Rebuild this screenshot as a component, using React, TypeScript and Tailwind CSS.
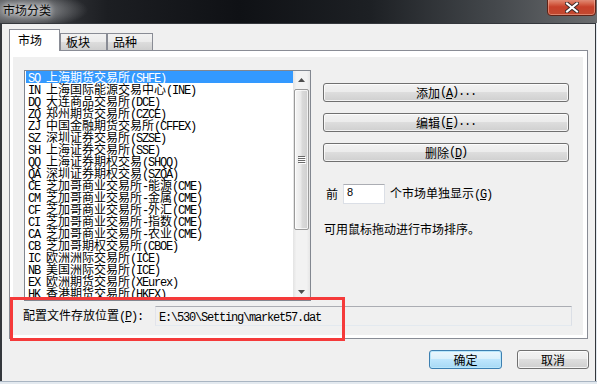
import React from "react";

const rows: [string, string][] = [
  ["SQ", "上海期货交易所(SHFE)"],
  ["IN", "上海国际能源交易中心(INE)"],
  ["DQ", "大连商品交易所(DCE)"],
  ["ZQ", "郑州期货交易所(CZCE)"],
  ["ZJ", "中国金融期货交易所(CFFEX)"],
  ["SZ", "深圳证券交易所(SZSE)"],
  ["SH", "上海证券交易所(SSE)"],
  ["QQ", "上海证券期权交易(SHQQ)"],
  ["QA", "深圳证券期权交易(SZQA)"],
  ["CE", "芝加哥商业交易所-能源(CME)"],
  ["CM", "芝加哥商业交易所-金属(CME)"],
  ["CF", "芝加哥商业交易所-外汇(CME)"],
  ["CI", "芝加哥商业交易所-指数(CME)"],
  ["CA", "芝加哥商业交易所-农业(CME)"],
  ["CB", "芝加哥期权交易所(CBOE)"],
  ["IC", "欧洲洲际交易所(ICE)"],
  ["NB", "美国洲际交易所(ICE)"],
  ["EX", "欧洲期货交易所(XEurex)"],
  ["HK", "香港期货交易所(HKEX)"],
];

function Mix({ t }: { t: string }) {
  const runs: { a: boolean; s: string }[] = [];
  for (const ch of t) {
    const a = ch.charCodeAt(0) < 128;
    const last = runs[runs.length - 1];
    if (last && last.a === a) last.s += ch;
    else runs.push({ a, s: ch });
  }
  return (
    <>
      {runs.map((r, i) =>
        r.a ? (
          <span key={i} className="font-['Liberation_Mono',monospace] tracking-[-1.2px] whitespace-pre">
            {r.s}
          </span>
        ) : (
          <span key={i}>{r.s}</span>
        )
      )}
    </>
  );
}

function Mn({ pre, k, post }: { pre: string; k: string; post: string }) {
  return (
    <>
      <Mix t={pre} />
      <span className="underline underline-offset-[1px]">
        <Mix t={k} />
      </span>
      <Mix t={post} />
    </>
  );
}

function Btn({ children, primary, className }: { children: React.ReactNode; primary?: boolean; className?: string }) {
  return (
    <div
      className={
        (primary
          ? "border border-[#3c7fb1] bg-[linear-gradient(to_bottom,#eaf6fd_0%,#d9f0fc_49%,#bee6fd_50%,#a7d9f5_100%)] shadow-[inset_0_0_0_1px_#b8e6fb] "
          : "border border-[#707070] bg-[linear-gradient(to_bottom,#f2f2f2_0%,#ebebeb_49%,#dddddd_50%,#cfcfcf_100%)] shadow-[inset_0_0_0_1px_rgba(255,255,255,0.75)] ") +
        "rounded-[3px] h-[19px] flex items-center justify-center text-[12px] leading-[17px] text-black " +
        (className ?? "")
      }
    >
      {children}
    </div>
  );
}

function Arrow({ up }: { up?: boolean }) {
  return (
    <svg width="7" height="4" viewBox="0 0 7 4">
      {up ? <path d="M3.5 0 L7 4 L0 4 Z" fill="#4d4d4d" /> : <path d="M0 0 L7 0 L3.5 4 Z" fill="#4d4d4d" />}
    </svg>
  );
}

export default function App() {
  return (
    <div className="relative w-[597px] h-[384px] overflow-hidden bg-[#e3e9ef] flex flex-col font-['Noto_Sans_CJK_SC',sans-serif] text-[12px] text-black">
      {/* Title bar */}
      <div className="relative h-[23px] shrink-0 bg-[radial-gradient(ellipse_60px_18px_at_28px_10px,rgba(190,192,195,0.8),rgba(190,192,195,0)_100%),linear-gradient(to_right,#4a4c50_0%,#1c1e22_18%,#0f1115_40%,#1d2024_62%,#464a4e_84%,#6b6d6f_100%)]">
        <span className="absolute left-[3px] top-[2px] text-[12px] leading-[16px] text-[#0a0a0a] [text-shadow:0_0_5px_rgba(255,255,255,0.9),0_0_9px_rgba(255,255,255,0.6)]">
          市场分类
        </span>
        <div className="absolute right-[1px] top-[-4px] w-[49px] h-[20px] rounded-b-[4px] border border-[#5e2317] bg-[linear-gradient(to_bottom,#e7a897_0%,#d7684f_35%,#c7402a_55%,#c24a31_100%)] shadow-[inset_0_0_0_1px_rgba(255,200,180,0.45)] flex items-center justify-center">
          <svg width="14" height="11" viewBox="0 0 14 11" className="mt-[2px]">
            <path d="M2 1.5 L12 9.5 M12 1.5 L2 9.5" stroke="#3a2a2a" strokeWidth="4" strokeLinecap="square" />
            <path d="M2 1.5 L12 9.5 M12 1.5 L2 9.5" stroke="#ffffff" strokeWidth="2" strokeLinecap="square" />
          </svg>
        </div>
      </div>

      {/* Client */}
      <div className="h-[358px] w-[596px] shrink-0 border-t border-l-2 border-r border-[#34373c] bg-[#f0f0f0] flex flex-col">
        <div className="pt-[5px] pl-[7px] pr-[7px] flex flex-col">
          {/* Tabs */}
          <div className="flex items-end h-[21px]">
            <div className="relative z-10 -mb-px h-[22px] w-[51px] border border-b-0 border-[#898c95] bg-white pl-[8px] pt-[2px] text-[12px] leading-[16px]">
              市场
            </div>
            <div className="h-[17px] w-[47px] border border-b-0 border-[#898c95] bg-[linear-gradient(to_bottom,#f2f2f2_0%,#ebebeb_49%,#dddddd_50%,#cfcfcf_100%)] pl-[5px] text-[12px] leading-[16px]">
              板块
            </div>
            <div className="h-[17px] w-[46px] border border-b-0 border-[#898c95] bg-[linear-gradient(to_bottom,#f2f2f2_0%,#ebebeb_49%,#dddddd_50%,#cfcfcf_100%)] pl-[5px] text-[12px] leading-[16px]">
              品种
            </div>
          </div>

          {/* Panel */}
          <div className="h-[289px] border border-[#898c95] bg-white pt-[6px] pl-[3px] pr-[4px] pb-[3px] flex">
            <div className="flex-1 bg-[#f0f0f0] pt-[13px] pl-[11px] flex flex-col">
              <div className="flex">
                {/* List */}
                <div className="w-[287px] h-[231px] border border-[#828790] bg-white flex">
                  <div className="flex-1 overflow-hidden pl-[1px]">
                    {rows.map(([c, n], i) => (
                      <div
                        key={c}
                        className={
                          i === 0
                            ? "h-[12px] leading-[12px] pl-[2px] whitespace-nowrap bg-[#3399ff] text-white"
                            : "h-[12px] leading-[12px] pl-[2px] whitespace-nowrap text-black"
                        }
                      >
                        <Mix t={`${c} ${n}`} />
                      </div>
                    ))}
                  </div>
                  {/* Scrollbar */}
                  <div className="w-[17px] flex flex-col bg-[linear-gradient(to_right,#e3e3e3_0%,#f2f2f2_20%,#f2f2f2_80%,#e6e6e6_100%)]">
                    <div className="h-[17px] flex items-center justify-center">
                      <Arrow up />
                    </div>
                    <div className="mt-[1px] mx-[1px] h-[141px] rounded-[2px] border border-[#9a9a9a] bg-[linear-gradient(to_right,#f6f6f6_0%,#e9e9e9_45%,#dadada_55%,#cfcfcf_100%)] shadow-[inset_0_0_0_1px_rgba(255,255,255,0.7)] flex items-center justify-center">
                      <svg width="8" height="8" viewBox="0 0 8 8">
                        <path d="M0 0.5 H7 M0 2.5 H7 M0 4.5 H7 M0 6.5 H7" stroke="#6a6a6a" strokeWidth="1" />
                        <path d="M1 1.5 H8 M1 3.5 H8 M1 5.5 H8 M1 7.5 H8" stroke="#ffffff" strokeWidth="1" />
                      </svg>
                    </div>
                    <div className="flex-1" />
                    <div className="h-[17px] flex items-center justify-center">
                      <Arrow />
                    </div>
                  </div>
                </div>

                {/* Right column */}
                <div className="ml-[12px] pt-[13px] w-[246px] flex flex-col">
                  <Btn>
                    <Mn pre="添加(" k="A" post=")..." />
                  </Btn>
                  <Btn className="mt-[11px]">
                    <Mn pre="编辑(" k="E" post=")..." />
                  </Btn>
                  <Btn className="mt-[11px]">
                    <Mn pre="删除(" k="D" post=")" />
                  </Btn>
                  <div className="mt-[22px] flex items-center pl-[3px] h-[20px]">
                    <span className="leading-[14px]">前</span>
                    <div className="ml-[5px] w-[42px] h-[20px] bg-white border border-[#dbdfe6] border-t-[#abadb3] pl-[3px] pt-[1px] font-['Liberation_Sans',sans-serif] text-[11px] leading-[13px]">
                      8
                    </div>
                    <span className="ml-[5px] leading-[14px]">
                      <Mn pre="个市场单独显示(" k="G" post=")" />
                    </span>
                  </div>
                  <div className="mt-[18px] pl-[1px] leading-[14px]">可用鼠标拖动进行市场排序。</div>
                </div>
              </div>

              {/* File path row */}
              <div className="mt-[5px] flex items-center h-[20px]">
                <div className="w-[132px] -ml-[1px] leading-[14px] whitespace-nowrap">
                  <Mn pre="配置文件存放位置(" k="P" post="):" />
                </div>
                <div className="w-[417px] h-[20px] border border-[#e2e3ea] border-t-[#abadb3] border-b-[#e3e9ef] border-r-[#dbdfe6] bg-[#f0f0f0] pl-[3px] leading-[18px] whitespace-nowrap">
                  <Mix t="E:\530\Setting\market57.dat" />
                </div>
              </div>
            </div>
          </div>
        </div>

        {/* Bottom buttons */}
        <div className="mt-[11px] pr-[6px] flex justify-end gap-[15px]">
          <Btn primary className="w-[73px]">
            确定
          </Btn>
          <Btn className="w-[72px]">取消</Btn>
        </div>
      </div>
      <div className="flex-1 border-t border-[#a9b5c2] bg-[#e3e9ef]" />

      {/* Red annotation box */}
      <div className="absolute left-[10px] top-[297px] w-[335px] h-[44px] border-[3px] border-[#f53a3a] pointer-events-none" />
    </div>
  );
}
